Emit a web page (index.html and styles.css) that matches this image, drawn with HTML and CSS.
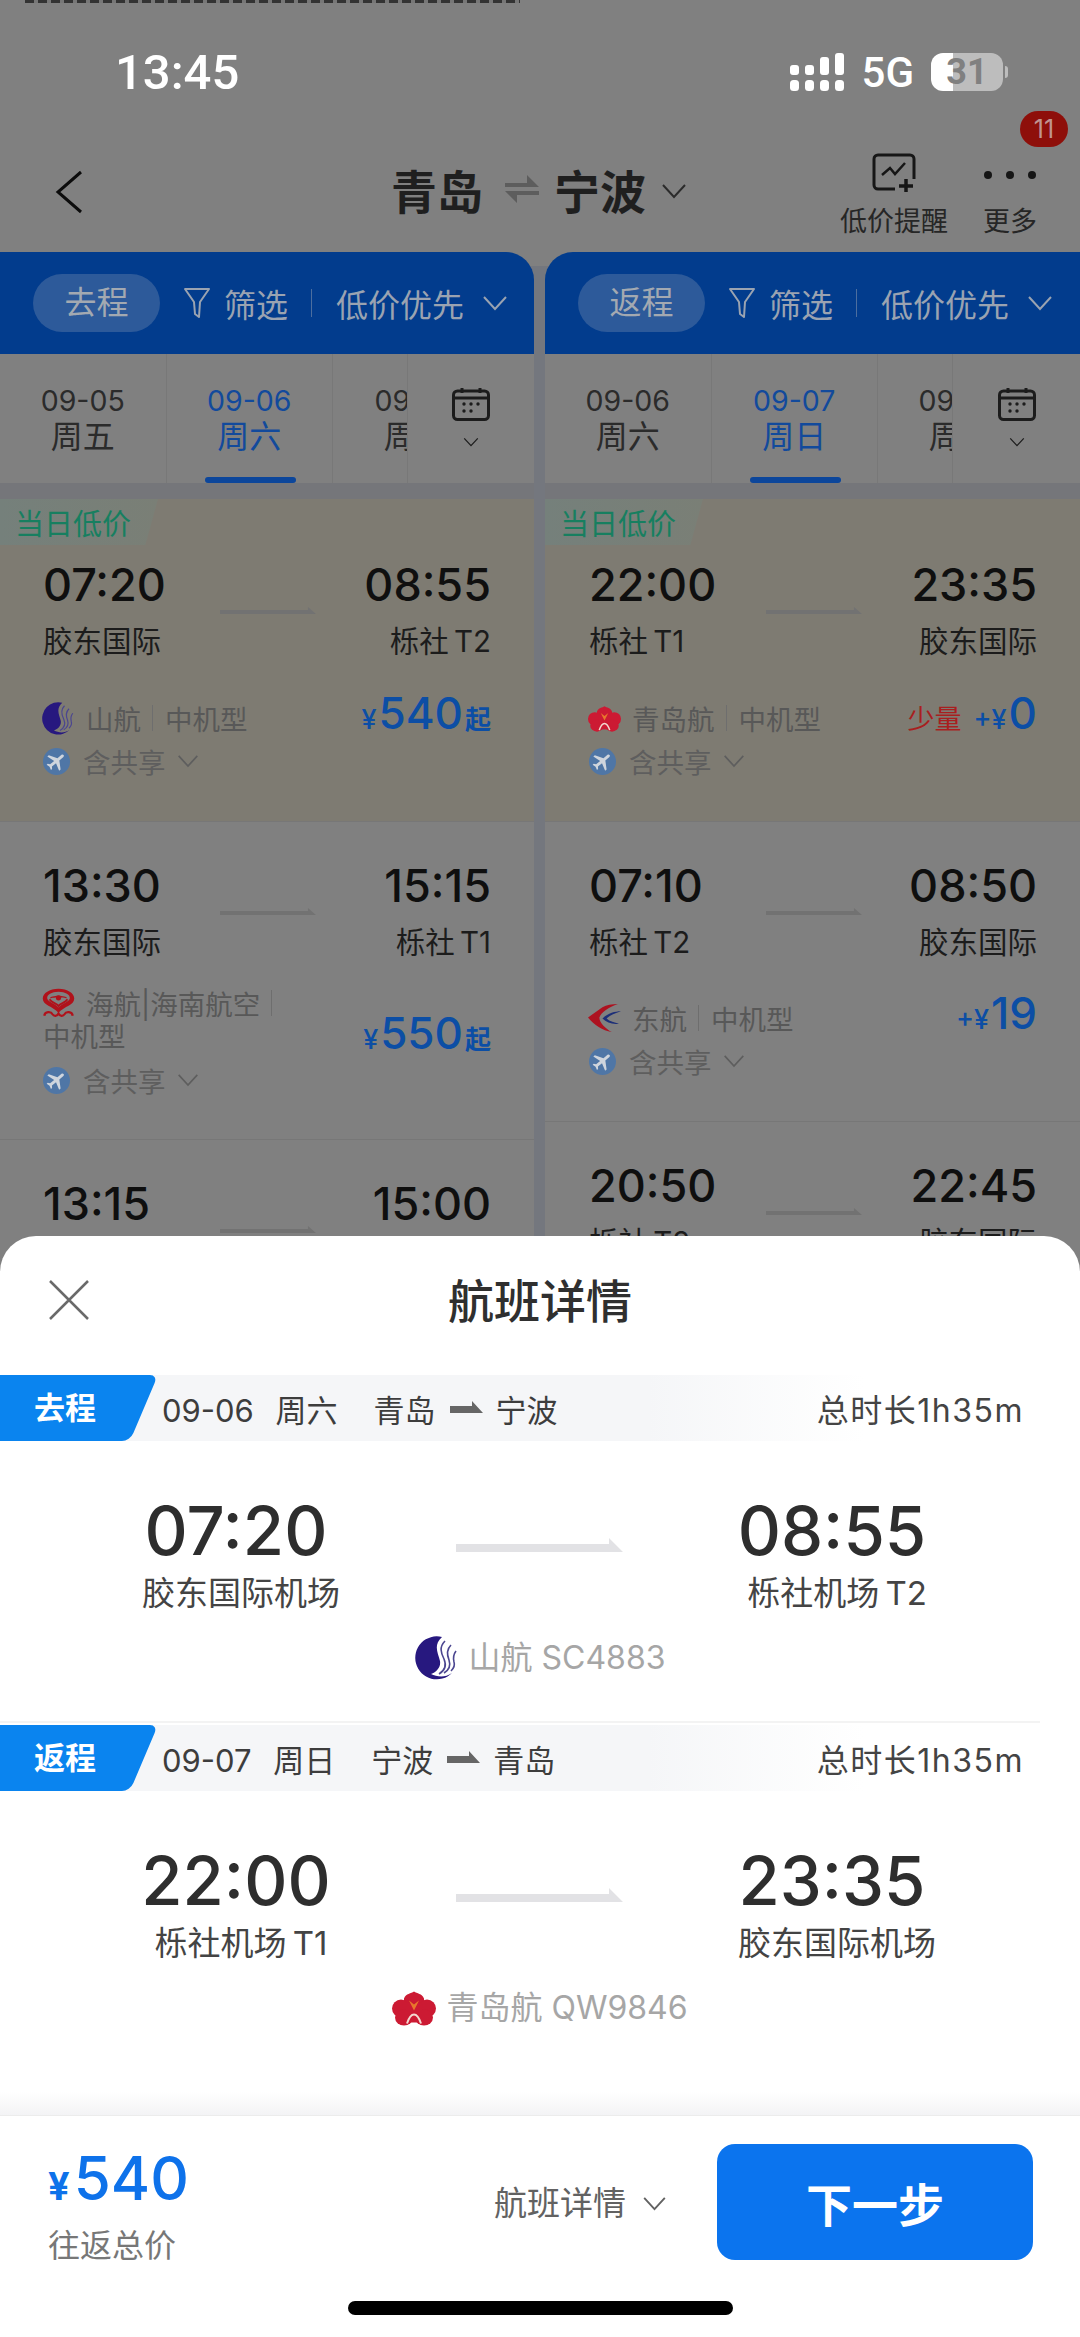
FILE: index.html
```html
<!DOCTYPE html>
<html lang="zh-CN">
<head>
  <meta charset="UTF-8" />
  <meta name="viewport" content="width=device-width, initial-scale=1.0" />
  <title>航班详情</title>
  <link rel="stylesheet" href="styles.css">
</head>
<body>
  <svg class="defs" width="0" height="0" aria-hidden="true">
    <symbol id="chev" viewBox="0 0 26 16"><path d="M2 2l11 12L24 2" fill="none" stroke="currentColor" stroke-width="2"/></symbol>
    <symbol id="line-arrow" viewBox="0 0 167 14" preserveAspectRatio="none"><path d="M0 6H153V0L167 14H0Z" fill="currentColor"/></symbol>
    <symbol id="small-arrow" viewBox="0 0 33 14"><path d="M0 5H22V0L33 12H0Z" fill="currentColor"/></symbol>
    <symbol id="funnel" viewBox="0 0 28 32"><path d="M2 2h24L17 15l-1 15-4-3-1-12Z" fill="none" stroke="currentColor" stroke-width="2" stroke-linejoin="round"/></symbol>
    <symbol id="calendar" viewBox="0 0 38 34"><rect x="1.500" y="4" width="35" height="28.500" rx="4" fill="none" stroke="currentColor" stroke-width="3"/><path d="M1.500 11h35M10 1v5M28 1v5" stroke="currentColor" stroke-width="3"/><g fill="currentColor"><circle cx="12" cy="17" r="1.700"/><circle cx="19" cy="17" r="1.700"/><circle cx="26" cy="17" r="1.700"/><circle cx="12" cy="24" r="1.700"/><circle cx="19" cy="24" r="1.700"/></g></symbol>
    <symbol id="plane" viewBox="0 0 28 28"><circle cx="14" cy="14" r="14" fill="#4f76a6"/><path transform="rotate(50 14 14) translate(2 2)" fill="#cfd5dd" d="M21 16v-2l-8-5V3.500c0-.830-.670-1.500-1.500-1.500S10 2.670 10 3.500V9l-8 5v2l8-2.500V19l-2 1.500V22l3.500-1 3.500 1v-1.500L13 19v-5.500l8 2.500z"/></symbol>
    <symbol id="sc-logo" viewBox="0 0 44 44"><path d="M27 1A21.500 21.500 0 1 0 37 37C30 42 22 41 16 38 22 36 26 31 25 25 23 17 18 9 27 1Z" fill="#27187f"/><path d="M30 5C24 11 26 17 29 23 32 30 29 35 24 38M36 9C31 14 32 19 34 24 36 30 34 34 29 37M41 15C38 19 38 22 39 26 40 29 39 32 36 35" fill="none" stroke="#4b4690" stroke-width="1.600"/></symbol>
    <symbol id="qw-logo" viewBox="0 0 44 35"><g fill="#cc1a33"><path d="M12 8C14 3 19 3 22 1c3 2 8 2 10 7 1 6-4 11-10 11S11 14 12 8Z"/><ellipse cx="9" cy="18" rx="9" ry="9"/><ellipse cx="35" cy="18" rx="9" ry="9"/><ellipse cx="12" cy="27" rx="9" ry="8"/><ellipse cx="32" cy="27" rx="9" ry="8"/><rect x="14" y="12" width="16" height="20"/></g><path d="M17 10l5 4 5-4-5 10Z" fill="#e8772c"/><path d="M15 33C17 27 20 24 22 24s5 3 7 9" fill="none" stroke="#f3d8d0" stroke-width="2"/></symbol>
    <symbol id="hu-logo" viewBox="0 0 44 40"><path d="M22 1C10 1 1 7 1 14c0 9 13 10 21 19 8-9 21-10 21-19C43 7 34 1 22 1Z" fill="#b0121b"/><path d="M22 5C13 5 6 9 7 14c1 5 10 6 15 12 5-6 14-7 15-12C38 9 31 5 22 5Z" fill="#808080"/><path d="M10 14c2-5 22-5 24 0-2-2-22-2-24 0Z" fill="#b0121b"/><path d="M10 15c3 5 9 5 12 9 3-4 9-4 12-9" fill="none" stroke="#b0121b" stroke-width="2.500"/><circle cx="22" cy="13" r="3.500" fill="#b0121b"/><path d="M3 37c1-6 9-6 11-2 2 3 6 3 8-1 2 4 6 4 8 1 2-4 10-4 11 2" fill="none" stroke="#b0121b" stroke-width="3"/></symbol>
    <symbol id="mu-logo" viewBox="0 0 32 27"><path d="M0 13 14 3C18 1 23 0 29 0 20 3 13 8 11 13c0 5 6 11 12 14C14 26 6 20 0 13Z" fill="#ad1220"/><path d="M14 14C19 9 26 7 32 7 26 9 21 11 18 14c3 3 8 4 12 5-6 1-12-1-16-5Z" fill="#1d2f78"/></symbol>
  </svg>

  <div class="page">
    <div class="cut-line"></div>

    <div class="status">
      <span class="clock">13:45</span>
      <div class="status-right">
        <svg class="signal" width="54" height="38" viewBox="0 0 54 38" fill="#fff">
          <rect x="0" y="12" width="9" height="10" rx="3"/><rect x="15" y="12" width="9" height="10" rx="3"/><rect x="30" y="4" width="9" height="18" rx="3"/><rect x="45" y="0" width="9" height="22" rx="3"/>
          <rect x="0" y="27" width="9" height="11" rx="3.500"/><rect x="15" y="27" width="9" height="11" rx="3.500"/><rect x="30" y="27" width="9" height="11" rx="3.500"/><rect x="45" y="27" width="9" height="11" rx="3.500"/>
        </svg>
        <span class="net">5G</span>
        <span class="battery">31</span>
        <span class="battery-tip"></span>
      </div>
    </div>

    <div class="nav">
      <svg class="back" width="28" height="44" viewBox="0 0 28 44"><path d="M26 2L3 22l23 20" fill="none" stroke="#0c0c0c" stroke-width="3"/></svg>
      <div class="route">
        <span>青岛</span>
        <svg width="34" height="30" viewBox="0 0 34 30" fill="#5d5d5d"><path d="M0 9h22V1l12 12H0Z"/><path d="M34 21H12v8L0 17h34Z"/></svg>
        <span>宁波</span>
        <svg class="route-chev"><use href="#chev"/></svg>
      </div>
      <div class="actions">
        <div class="action">
          <svg width="50" height="42" viewBox="0 0 50 42" fill="none" stroke="#161616" stroke-width="3"><path d="M26 36H9a4 4 0 0 1-4-4V6a4 4 0 0 1 4-4h32a4 4 0 0 1 4 4v20"/><path d="M13 22l8-7 5 6 10-11" stroke-width="2.500"/><path d="M37 26v13M30 33h14" stroke-width="3.500"/></svg>
          <span>低价提醒</span>
        </div>
        <div class="action more">
          <span class="badge">11</span>
          <svg width="54" height="42" viewBox="0 0 54 42" fill="#161616"><circle cx="5" cy="22" r="4"/><circle cx="27" cy="22" r="4"/><circle cx="49" cy="22" r="4"/></svg>
          <span>更多</span>
        </div>
      </div>
    </div>

    <div class="panels">
      <section class="panel left">
        <div class="head">
          <span class="pill">去程</span>
          <svg class="funnel"><use href="#funnel"/></svg>
          <span class="filter">筛选</span>
          <i class="head-sep"></i>
          <span class="sort">低价优先</span>
          <svg class="sort-chev"><use href="#chev"/></svg>
        </div>
        <div class="dates">
          <div class="strip">
            <div class="tab"><b>09-05</b><span>周五</span></div>
            <div class="tab on"><b>09-06</b><span>周六</span></div>
            <div class="tab"><b>09-07</b><span>周日</span></div>
          </div>
          <div class="cal">
            <svg class="cal-icon"><use href="#calendar"/></svg>
            <svg class="cal-chev"><use href="#chev"/></svg>
          </div>
        </div>
        <div class="gap"></div>

        <article class="card low">
          <span class="low-tag">当日低价</span>
          <div class="times"><b>07:20</b><svg class="mini-arrow"><use href="#line-arrow"/></svg><b class="end">08:55</b></div>
          <div class="ports"><span>胶东国际</span><span>栎社 T2</span></div>
          <div class="bottom">
            <div class="info">
              <div class="airline"><svg class="logo" width="33" height="33"><use href="#sc-logo"/></svg><span>山航</span><i></i><span>中机型</span></div>
              <div class="share"><svg width="27" height="27"><use href="#plane"/></svg><span>含共享</span><svg class="share-chev"><use href="#chev"/></svg></div>
            </div>
            <div class="price"><small>¥</small><b>540</b><em>起</em></div>
          </div>
        </article>

        <article class="card wrap">
          <div class="times"><b>13:30</b><svg class="mini-arrow"><use href="#line-arrow"/></svg><b class="end">15:15</b></div>
          <div class="ports"><span>胶东国际</span><span>栎社 T1</span></div>
          <div class="bottom">
            <div class="info">
              <div class="airline"><svg class="logo" width="33" height="30"><use href="#hu-logo"/></svg><span>海航|海南航空</span><i></i></div>
              <div class="airline-more">中机型</div>
              <div class="share"><svg width="27" height="27"><use href="#plane"/></svg><span>含共享</span><svg class="share-chev"><use href="#chev"/></svg></div>
            </div>
            <div class="price"><small>¥</small><b>550</b><em>起</em></div>
          </div>
        </article>

        <article class="card">
          <div class="times"><b>13:15</b><svg class="mini-arrow"><use href="#line-arrow"/></svg><b class="end">15:00</b></div>
        </article>
      </section>

      <section class="panel right">
        <div class="head">
          <span class="pill">返程</span>
          <svg class="funnel"><use href="#funnel"/></svg>
          <span class="filter">筛选</span>
          <i class="head-sep"></i>
          <span class="sort">低价优先</span>
          <svg class="sort-chev"><use href="#chev"/></svg>
        </div>
        <div class="dates">
          <div class="strip">
            <div class="tab"><b>09-06</b><span>周六</span></div>
            <div class="tab on"><b>09-07</b><span>周日</span></div>
            <div class="tab"><b>09-08</b><span>周一</span></div>
          </div>
          <div class="cal">
            <svg class="cal-icon"><use href="#calendar"/></svg>
            <svg class="cal-chev"><use href="#chev"/></svg>
          </div>
        </div>
        <div class="gap"></div>

        <article class="card low">
          <span class="low-tag">当日低价</span>
          <div class="times"><b>22:00</b><svg class="mini-arrow"><use href="#line-arrow"/></svg><b class="end">23:35</b></div>
          <div class="ports"><span>栎社 T1</span><span>胶东国际</span></div>
          <div class="bottom">
            <div class="info">
              <div class="airline"><svg class="logo" width="33" height="27"><use href="#qw-logo"/></svg><span>青岛航</span><i></i><span>中机型</span></div>
              <div class="share"><svg width="27" height="27"><use href="#plane"/></svg><span>含共享</span><svg class="share-chev"><use href="#chev"/></svg></div>
            </div>
            <div class="price"><span class="few">少量</span><small>+¥</small><b>0</b></div>
          </div>
        </article>

        <article class="card short">
          <div class="times"><b>07:10</b><svg class="mini-arrow"><use href="#line-arrow"/></svg><b class="end">08:50</b></div>
          <div class="ports"><span>栎社 T2</span><span>胶东国际</span></div>
          <div class="bottom">
            <div class="info">
              <div class="airline"><svg class="logo" width="33" height="28"><use href="#mu-logo"/></svg><span>东航</span><i></i><span>中机型</span></div>
              <div class="share"><svg width="27" height="27"><use href="#plane"/></svg><span>含共享</span><svg class="share-chev"><use href="#chev"/></svg></div>
            </div>
            <div class="price"><small>+¥</small><b>19</b></div>
          </div>
        </article>

        <article class="card">
          <div class="times"><b>20:50</b><svg class="mini-arrow"><use href="#line-arrow"/></svg><b class="end">22:45</b></div>
          <div class="ports"><span>栎社 T2</span><span>胶东国际</span></div>
        </article>
      </section>
    </div>

    <div class="sheet">
      <div class="sheet-head">
        <svg class="close" width="42" height="40" viewBox="0 0 42 40"><path d="M2 1l38 38M40 1L2 39" fill="none" stroke="#6a6a6a" stroke-width="2.500"/></svg>
        <h2>航班详情</h2>
      </div>

      <div class="band">
        <span class="trip-tag">去程</span>
        <span class="band-date">09-06 周六</span>
        <span class="band-city">青岛</span>
        <svg class="band-arrow"><use href="#small-arrow"/></svg>
        <span>宁波</span>
        <span class="band-total">总时长1h35m</span>
      </div>
      <div class="flight">
        <div class="flight-row">
          <div class="flight-col start"><b>07:20</b><span>胶东国际机场</span></div>
          <svg class="flight-arrow"><use href="#line-arrow"/></svg>
          <div class="flight-col stop"><b>08:55</b><span>栎社机场 T2</span></div>
        </div>
        <div class="flight-no"><svg width="44" height="44"><use href="#sc-logo"/></svg><span>山航 SC4883</span></div>
      </div>
      <div class="divider"></div>

      <div class="band">
        <span class="trip-tag">返程</span>
        <span class="band-date">09-07 周日</span>
        <span class="band-city">宁波</span>
        <svg class="band-arrow"><use href="#small-arrow"/></svg>
        <span>青岛</span>
        <span class="band-total">总时长1h35m</span>
      </div>
      <div class="flight">
        <div class="flight-row">
          <div class="flight-col start"><b>22:00</b><span>栎社机场 T1</span></div>
          <svg class="flight-arrow"><use href="#line-arrow"/></svg>
          <div class="flight-col stop"><b>23:35</b><span>胶东国际机场</span></div>
        </div>
        <div class="flight-no"><svg width="44" height="36"><use href="#qw-logo"/></svg><span>青岛航 QW9846</span></div>
      </div>

      <div class="foot-fade"></div>
      <div class="foot">
        <div class="total">
          <div class="total-price"><small>¥</small><b>540</b></div>
          <span>往返总价</span>
        </div>
        <div class="detail"><span>航班详情</span><svg><use href="#chev"/></svg></div>
        <button class="next">下一步</button>
      </div>
      <div class="home"></div>
    </div>
  </div>
</body>
</html>
```

FILE: styles.css
```css
* {
  box-sizing: border-box;
}
html, body {
  margin: 0;
  padding: 0;
}
body {
  font-family: Inter, "Noto Sans CJK SC", sans-serif;
  background: #808080;
  color: #141414;
}
.defs {
  position: absolute;
}
.page {
  position: relative;
  width: 1080px;
  height: 2337px;
  overflow: hidden;
  background: #808080;
}
.cut-line {
  height: 3px;
  margin: 0 560px 0 25px;
  background: repeating-linear-gradient(90deg, #333 0 9px, #777 9px 13px);
}

/* status bar */
.status {
  display: flex;
  justify-content: space-between;
  align-items: center;
  height: 96px;
  margin-top: 21px;
  padding: 0 72px 0 115px;
  color: #fff;
  font-family: Roboto, sans-serif;
}
.clock {
  font-size: 49px;
  font-weight: 500;
}
.status-right {
  display: flex;
  align-items: center;
}
.net {
  margin-left: 18px;
  font-size: 42px;
  font-weight: 500;
}
.battery {
  display: flex;
  justify-content: center;
  align-items: center;
  width: 72px;
  height: 38px;
  margin-left: 17px;
  border-radius: 12px;
  background: linear-gradient(90deg, #fff 0 31%, #bdbdbd 31%);
  color: #808080;
  font-size: 36px;
  font-weight: 700;
}
.battery-tip {
  width: 3px;
  height: 12px;
  margin-left: 2px;
  border-radius: 0 3px 3px 0;
  background: #bdbdbd;
}

/* nav */
.nav {
  display: grid;
  grid-template-columns: 1fr auto 1fr;
  height: 132px;
  padding: 33px 43px 0 41px;
}
.back {
  margin: 17px 0 0 14px;
}
.route {
  display: flex;
  align-items: center;
  height: 72px;
  font-size: 46px;
  font-weight: 700;
  color: #1f1f1f;
}
.route svg {
  margin: 0 15px 0 22px;
}
.route .route-chev {
  width: 26px;
  height: 16px;
  margin: 4px 0 0 15px;
  color: #2b2b2b;
}
.actions {
  display: flex;
  justify-content: flex-end;
  gap: 35px;
}
.action {
  position: relative;
  display: flex;
  flex-direction: column;
  align-items: center;
  font-size: 27px;
  color: #262626;
}
.action span {
  margin-top: 9px;
  line-height: 36px;
}
.action .badge {
  position: absolute;
  top: -42px;
  right: -31px;
  width: 48px;
  height: 36px;
  margin: 0;
  border-radius: 18px;
  background: #8e0f0a;
  color: #c09490;
  font-size: 25px;
  text-align: center;
}

/* the two columns behind the sheet */
.panels {
  display: grid;
  grid-template-columns: 534px 535px;
  gap: 11px;
  background: linear-gradient(#808080 0 14px, #74777e 14px);
}
.panel {
  min-width: 0;
}
.head {
  display: flex;
  align-items: center;
  height: 102px;
  padding-left: 33px;
  background: #023c8d;
  color: #9aa3b1;
  font-size: 32px;
}
.left .head {
  border-top-right-radius: 28px;
}
.right .head {
  border-top-left-radius: 28px;
}
.pill {
  width: 127px;
  height: 58px;
  border-radius: 29px;
  background: #2d5a9a;
  line-height: 58px;
  text-align: center;
  color: #a3a9b1;
}
.funnel {
  width: 28px;
  height: 32px;
  margin: 0 13px 0 23px;
}
.head-sep {
  width: 1px;
  height: 28px;
  margin: 0 24px 0 23px;
  background: #4c6e9f;
}
.sort-chev {
  width: 26px;
  height: 16px;
  margin-left: 18px;
}
.dates {
  display: flex;
  height: 129px;
  background: #808080;
}
.strip {
  display: flex;
  width: 407px;
  overflow: hidden;
}
.tab {
  position: relative;
  display: flex;
  flex: none;
  flex-direction: column;
  align-items: center;
  width: 166.500px;
  padding-top: 28px;
  border-right: 1px solid #787878;
}
.tab b {
  font-size: 28.500px;
  font-weight: 400;
  line-height: 38px;
  color: #2b2b2b;
}
.tab span {
  margin-top: -5px;
  font-size: 32px;
  line-height: 44px;
  color: #2b2b2b;
}
.tab.on b, .tab.on span {
  color: #124a9c;
}
.tab.on::after {
  content: "";
  position: absolute;
  left: 38px;
  bottom: 0;
  width: 91px;
  height: 6px;
  border-radius: 3px;
  background: #0c469b;
}
.cal {
  display: flex;
  flex: 1;
  flex-direction: column;
  align-items: center;
  padding-top: 33px;
  border-left: 1px solid #787878;
  color: #1c1c1c;
}
.cal-icon {
  width: 38px;
  height: 34px;
}
.cal-chev {
  width: 16px;
  height: 10px;
  margin-top: 16px;
}
.gap {
  height: 16px;
  background: #75767a;
}

/* flight cards */
.card {
  position: relative;
  height: 318px;
  padding: 41px 43px 0;
  border-bottom: 1px solid #777;
  background: #808080;
}
.right .card {
  padding-left: 44px;
}
.card.low {
  height: 323px;
  padding-top: 63px;
  background: #7e7b72;
}
.card.short {
  height: 300px;
}
.low-tag {
  position: absolute;
  top: 0;
  left: 0;
  z-index: 1;
  width: 158px;
  height: 46px;
  padding-left: 15px;
  background: linear-gradient(90deg, #75807b, #7a7f76);
  clip-path: polygon(0 0, 100% 0, 92% 100%, 0 100%);
  color: #177f60;
  font-size: 29px;
  line-height: 52px;
  white-space: nowrap;
}
.times {
  display: grid;
  grid-template-columns: 177px 96px 1fr;
  grid-template-rows: 46px;
}
.times b {
  font-size: 45px;
  font-weight: 500;
  line-height: 46px;
  color: #0f0f0f;
}
.times .end {
  text-align: right;
}
.mini-arrow {
  width: 96px;
  height: 7px;
  margin-top: 45px;
  color: #727272;
}
.ports {
  display: flex;
  justify-content: space-between;
  margin-top: 13px;
  font-size: 29.500px;
  line-height: 40px;
  word-spacing: -3px;
  color: #1c1c1c;
}
.bottom {
  display: flex;
  justify-content: space-between;
  align-items: flex-start;
  margin-top: 40px;
}
.wrap .bottom {
  margin-top: 24px;
}
.short .bottom {
  margin-top: 39px;
}
.airline, .share {
  display: flex;
  align-items: center;
  height: 34px;
  font-size: 27.500px;
  color: #585858;
}
.airline .logo {
  flex: none;
  margin: 0 11px 0 -1px;
}
.airline i {
  width: 1px;
  height: 26px;
  margin: 0 12px 0 11px;
  background: #6e6e6e;
}
.airline-more {
  height: 33px;
  margin-top: 1px;
  font-size: 27.500px;
  line-height: 33px;
  color: #585858;
}
.share {
  margin-top: 9px;
  color: #5e5e5e;
}
.share svg:first-child {
  margin-right: 13px;
}
.share-chev {
  width: 22px;
  height: 14px;
  margin-left: 11px;
}
.price {
  display: flex;
  align-items: baseline;
  margin-top: -11px;
  line-height: 46px;
  color: #0c4ea5;
}
.wrap .price {
  margin-top: 24px;
}
.price small {
  margin-right: 2px;
  font-size: 27px;
  font-weight: 500;
}
.price b {
  font-size: 44px;
  font-weight: 500;
}
.price em {
  margin-left: 2px;
  font-size: 26px;
  font-style: normal;
  font-weight: 700;
}
.few {
  margin-right: 12px;
  font-size: 27px;
  color: #a81f1f;
}

/* bottom sheet, sits over the list */
.sheet {
  position: absolute;
  top: 1236px;
  left: 0;
  right: 0;
  bottom: 0;
  display: flex;
  flex-direction: column;
  border-radius: 36px 36px 0 0;
  background: #fff;
}
.sheet-head {
  display: flex;
  justify-content: center;
  height: 139px;
  padding-top: 37px;
  position: relative;
}
.sheet-head h2 {
  margin: 0;
  font-size: 46px;
  font-weight: 500;
  line-height: 56px;
  color: #2f2f2f;
}
.close {
  position: absolute;
  left: 48px;
  top: 44px;
}
.band {
  isolation: isolate;
  display: flex;
  align-items: center;
  flex: none;
  height: 66px;
  overflow: hidden;
  background: linear-gradient(90deg, #f5f6f8 60%, #fff 80%);
  font-size: 31px;
  color: #3d3d3d;
}
.trip-tag {
  position: relative;
  width: 144px;
  margin-right: 18px;
  padding-left: 34px;
  font-size: 31px;
  font-weight: 700;
  line-height: 66px;
  color: #fff;
}
.trip-tag::before {
  content: "";
  position: absolute;
  top: 0;
  bottom: 0;
  left: -40px;
  right: 0;
  z-index: -1;
  border-radius: 0 8px 8px 0;
  background: #0a84ef;
  transform: skewX(-23deg);
}
.band-date {
  margin-right: 36px;
  word-spacing: 13px;
  white-space: nowrap;
}
.band-arrow {
  width: 33px;
  height: 14px;
  margin: 0 13px 0 14px;
  color: #666;
}
.band-total {
  margin-left: auto;
  padding-right: 56px;
  font-size: 32px;
  letter-spacing: 1.500px;
  color: #444;
}
.flight {
  flex: none;
  height: 280px;
  padding-top: 55px;
}
.flight-row {
  display: flex;
  align-items: flex-start;
  padding-left: 44px;
}
.flight-col {
  display: flex;
  flex-direction: column;
  align-items: center;
}
.flight-col.start {
  width: 394px;
}
.flight-col.stop {
  width: 386px;
}
.flight-col b {
  padding-right: 10px;
  font-size: 67px;
  font-weight: 500;
  line-height: 70px;
  color: #2e2e2e;
}
.flight-col span {
  margin-top: 5px;
  font-size: 33px;
  line-height: 44px;
  word-spacing: -3px;
  color: #444;
}
.flight-arrow {
  flex: none;
  width: 167px;
  height: 14px;
  margin: 42px 21px 0 18px;
  color: #e2e2e5;
}
.flight-no {
  display: flex;
  justify-content: center;
  align-items: center;
  gap: 10px;
  margin-top: 21px;
  font-size: 32px;
  line-height: 44px;
  color: #a6a6a6;
}
.divider {
  flex: none;
  width: 1040px;
  height: 2px;
  margin-bottom: 2px;
  background: #f3f3f3;
}
.foot-fade {
  flex: 1;
  background: linear-gradient(#fff calc(100% - 24px), #f3f3f5);
}
.foot {
  display: flex;
  align-items: flex-start;
  flex: none;
  height: 222px;
  padding: 28px 47px 0 48px;
  border-top: 1px solid #ececec;
}
.total {
  margin-top: 4px;
}
.total-price {
  display: flex;
  align-items: baseline;
  line-height: 60px;
  color: #0e72ea;
}
.total-price small {
  margin-right: 4px;
  font-size: 38px;
  font-weight: 700;
}
.total-price b {
  font-size: 60px;
  font-weight: 500;
}
.total span {
  display: block;
  margin-top: 8px;
  font-size: 32px;
  line-height: 44px;
  color: #777;
}
.detail {
  display: flex;
  align-items: center;
  margin: 37px 50px 0 auto;
  font-size: 33px;
  line-height: 44px;
  color: #626262;
}
.detail svg {
  width: 25px;
  height: 15px;
  margin-left: 16px;
}
.next {
  flex: none;
  width: 316px;
  height: 116px;
  border: none;
  border-radius: 18px;
  background: #0b74ee;
  color: #fff;
  font-family: inherit;
  font-size: 46px;
  font-weight: 700;
}
.home {
  position: absolute;
  left: 348px;
  bottom: 22px;
  width: 385px;
  height: 14px;
  border-radius: 7px;
  background: #000;
}
```
